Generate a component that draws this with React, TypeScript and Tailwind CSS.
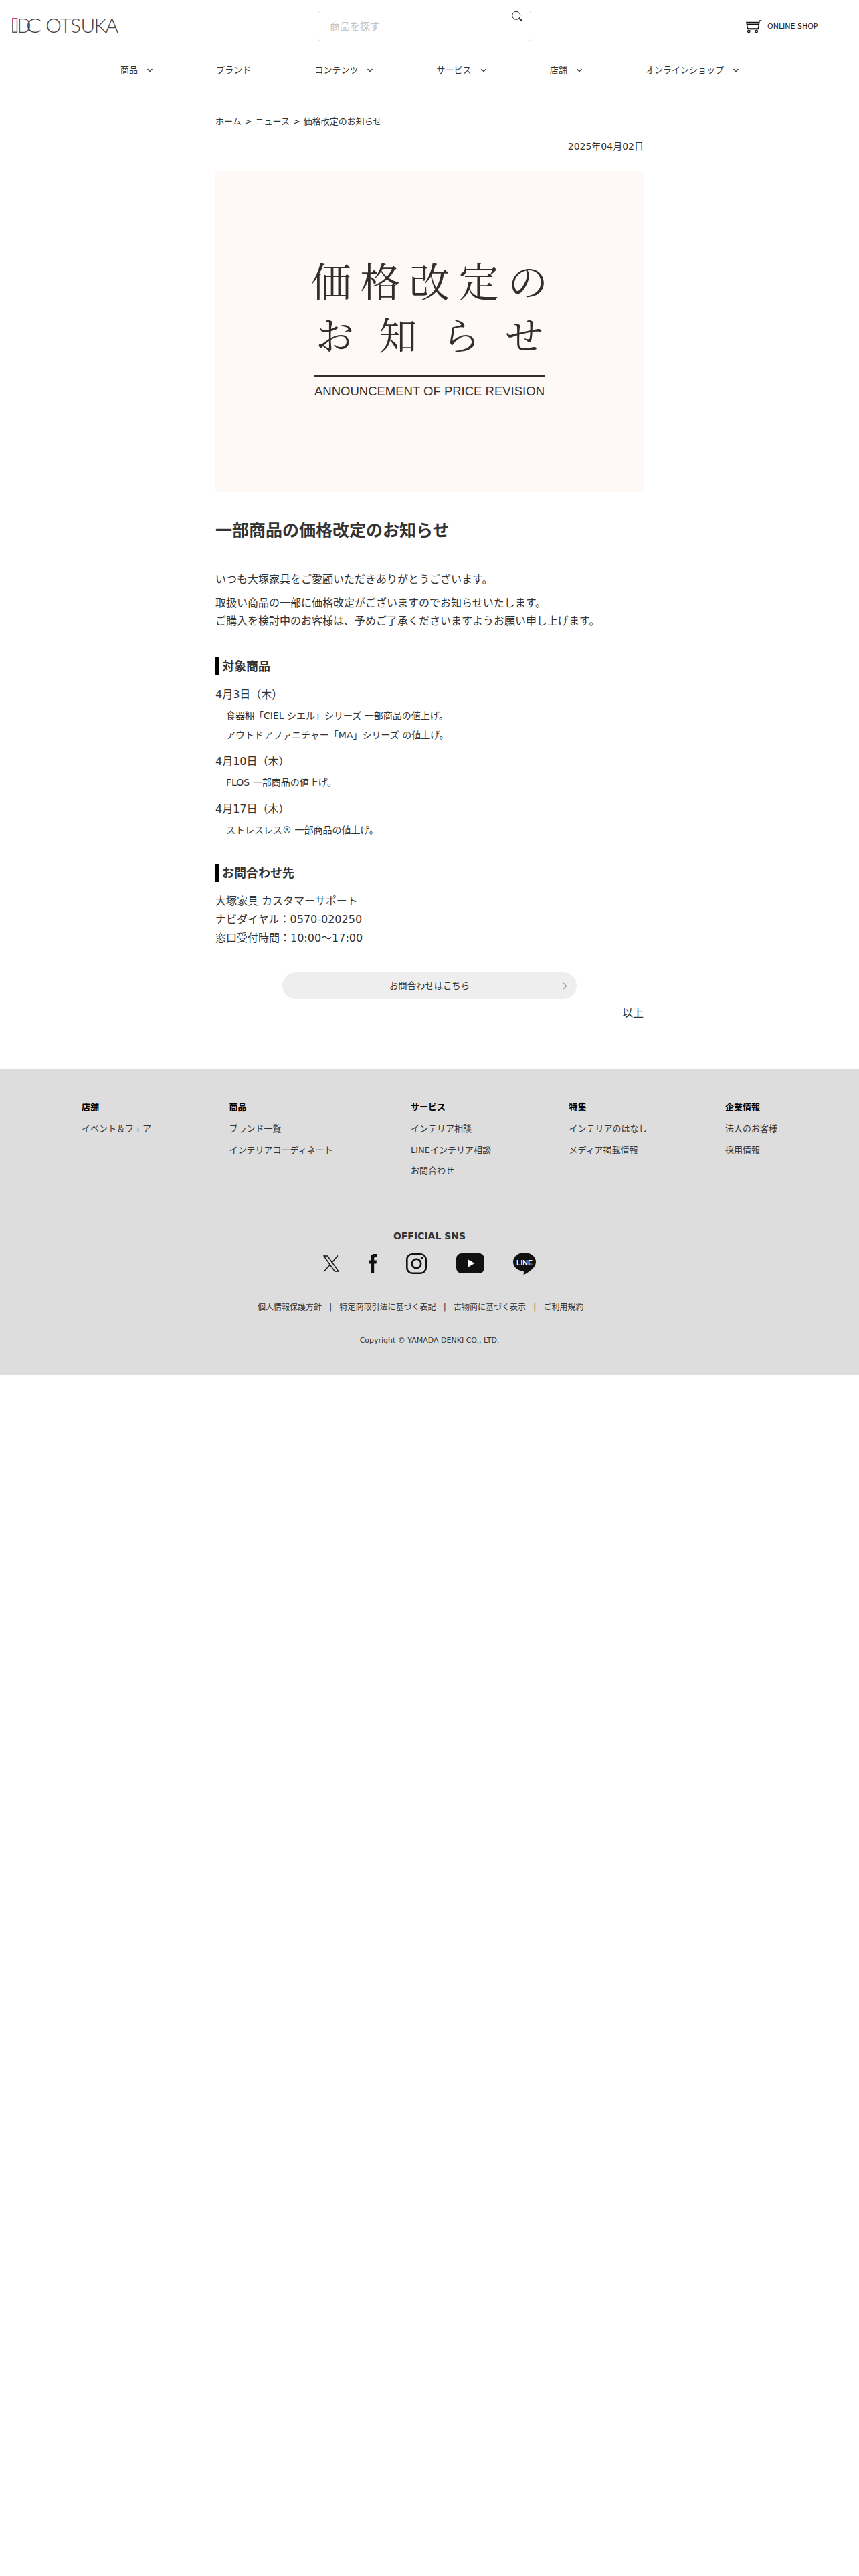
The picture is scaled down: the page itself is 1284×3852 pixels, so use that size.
import type { ReactNode } from 'react'

const navItems = [
  { label: '商品', menu: true },
  { label: 'ブランド', menu: false },
  { label: 'コンテンツ', menu: true },
  { label: 'サービス', menu: true },
  { label: '店舗', menu: true },
  { label: 'オンラインショップ', menu: true },
]

const footerColumns = [
  { title: '店舗', links: ['イベント＆フェア'] },
  { title: '商品', links: ['ブランド一覧', 'インテリアコーディネート'] },
  { title: 'サービス', links: ['インテリア相談', 'LINEインテリア相談', 'お問合わせ'] },
  { title: '特集', links: ['インテリアのはなし', 'メディア掲載情報'] },
  { title: '企業情報', links: ['法人のお客様', '採用情報'] },
]

const legalLinks = ['個人情報保護方針', '特定商取引法に基づく表記', '古物商に基づく表示', 'ご利用規約']

function Logo() {
  return (
    <svg width="164" height="26" viewBox="0 0 164 26" className="block" aria-label="IDC OTSUKA">
      <defs>
        <linearGradient id="mark" x1="0" y1="0" x2="0" y2="1">
          <stop offset="0" stopColor="#c8285f" />
          <stop offset="0.25" stopColor="#c8285f" />
          <stop offset="0.4" stopColor="#4a4a4a" />
        </linearGradient>
      </defs>
      <rect x="1.9" y="2.8" width="6.6" height="20.4" fill="none" stroke="url(#mark)" strokeWidth="1.4" />
      <g fill="#444" fontFamily="Lato" fontWeight="300" fontSize="30">
        <text x="8.5" y="24" textLength="21" lengthAdjust="spacingAndGlyphs">D</text>
        <text x="22" y="24" textLength="23" lengthAdjust="spacingAndGlyphs">C</text>
        <text x="51.3 72.3 88 103.5 123.5 140.500" y="24">OTSUKA</text>
      </g>
    </svg>
  )
}

function ChevronDown() {
  return (
    <svg width="8" height="6" viewBox="0 0 8 6" fill="none" stroke="#333" strokeWidth="1.3">
      <path d="M0.5 1 4 4.6 7.5 1" />
    </svg>
  )
}

function CartIcon() {
  return (
    <svg width="24" height="20" viewBox="0 0 24 20" fill="none" stroke="#111" strokeWidth="1.3">
      <path d="M1 3.5h18.5v3H1.5z" fill="#bbb" />
      <path d="M1 3.5 2.8 13.5h15.4L20.2 1h3.3" />
      <path d="M2.8 13.2h15.4" strokeWidth="1.8" />
      <circle cx="4.3" cy="17" r="1.7" />
      <circle cx="15.8" cy="17" r="1.7" />
    </svg>
  )
}

function Header() {
  return (
    <header className="h-[132px] border-b border-[#e5e5e5]">
      <div className="flex h-[77px] items-start">
        <div className="w-[475px] pl-[17px] pt-[25px]">
          <Logo />
        </div>
        <div className="mt-4 flex h-[46px] w-[319px] items-start rounded border border-[#ddd]">
          <span className="mt-[11px] w-[271px] pl-[17px] text-[15px] leading-6 text-[#c4c4c4]">商品を探す</span>
          <span className="mt-2 h-[30px] w-px bg-[#ddd]" />
          <svg className="ml-[17px]" width="17" height="16" viewBox="0 0 17 16" fill="none" stroke="#222">
            <circle cx="6.7" cy="6.3" r="6" />
            <path d="m11 10.5 4.7 4.3" strokeWidth="1.9" />
          </svg>
        </div>
        <div className="ml-[321px] mt-[30px] flex gap-[8px]">
          <CartIcon />
          <span className="text-[11px] leading-[20px] text-[#222]">ONLINE SHOP</span>
        </div>
      </div>
      <nav className="mx-[180px] flex h-[55px] justify-between">
        {navItems.map(item => (
          <div key={item.label} className="flex h-[55px] items-center gap-[14px] text-[13px]">
            <span>{item.label}</span>
            {item.menu && <ChevronDown />}
          </div>
        ))}
      </nav>
    </header>
  )
}

function Banner() {
  return (
    <div className="mt-[25px] flex h-[480px] flex-col items-center bg-[#fef9f7] pt-[129px] text-[#332d2c]">
      <div className="flex w-[354px] justify-between font-['Noto_Serif_CJK_JP','Noto_Sans_CJK_JP',serif] text-[60px] leading-[66px]">
        {['価', '格', '改', '定', 'の'].map(c => <span key={c}>{c}</span>)}
      </div>
      <div className="mt-[14px] flex w-[340px] justify-between font-['Noto_Serif_CJK_JP','Noto_Sans_CJK_JP',serif] text-[57px] leading-[66px]">
        {['お', '知', 'ら', 'せ'].map(c => <span key={c}>{c}</span>)}
      </div>
      <div className="mt-[30px] h-[2px] w-[346px] bg-[#332d2c]" />
      <p className="mt-[10px] whitespace-nowrap font-['Liberation_Sans',sans-serif] text-[18.5px] leading-[24px]">
        ANNOUNCEMENT OF PRICE REVISION
      </p>
    </div>
  )
}

function SectionTitle({ children }: { children: ReactNode }) {
  return (
    <h2 className="border-l-[5px] border-black pl-[5px] text-[18px] font-bold leading-[27px]">{children}</h2>
  )
}

function Article() {
  return (
    <main className="mx-auto h-[1467px] w-[640px] pt-[37px] text-[16px] leading-[27px]">
      <p className="flex gap-[5px] text-[13px] leading-[26px]">
        <span>ホーム</span>
        <span>&gt;</span>
        <span>ニュース</span>
        <span>&gt;</span>
        <span>価格改定のお知らせ</span>
      </p>
      <p className="mt-[12px] text-right text-[14px] leading-[24px]">2025年04月02日</p>
      <Banner />
      <h1 className="mt-[38px] text-[25px] font-bold leading-[40px]">一部商品の価格改定のお知らせ</h1>

      <p className="mt-[39px]">いつも大塚家具をご愛顧いただきありがとうございます。</p>
      <p className="mt-[8px]">
        取扱い商品の一部に価格改定がございますのでお知らせいたします。
        <br />
        ご購入を検討中のお客様は、予めご了承くださいますようお願い申し上げます。
      </p>

      <div className="mt-[41px]">
        <SectionTitle>対象商品</SectionTitle>
        <p className="mt-[15px]">4月3日（木）</p>
        <p className="mt-[5px] pl-4 text-[14px]">食器棚「CIEL シエル」シリーズ 一部商品の値上げ。</p>
        <p className="mt-[2px] pl-4 text-[14px]">アウトドアファニチャー「MA」シリーズ の値上げ。</p>
        <p className="mt-[12px]">4月10日（木）</p>
        <p className="mt-[5px] pl-4 text-[14px]">FLOS 一部商品の値上げ。</p>
        <p className="mt-[12px]">4月17日（木）</p>
        <p className="mt-[5px] pl-4 text-[14px]">ストレスレス® 一部商品の値上げ。</p>
      </div>

      <div className="mt-[37px]">
        <SectionTitle>お問合わせ先</SectionTitle>
        <p className="mt-[15px] leading-[27.4px]">
          大塚家具 カスタマーサポート
          <br />
          ナビダイヤル：0570-020250
          <br />
          窓口受付時間：10:00～17:00
        </p>
      </div>

      <a className="mx-auto mt-[38px] grid h-[40px] w-[440px] grid-cols-[1fr_auto_1fr] items-center rounded-[20px] bg-[#eee] text-[13.333px]">
        <span />
        <span>お問合わせはこちら</span>
        <svg className="mr-[14px] justify-self-end" width="7" height="11" viewBox="0 0 7 11" fill="none" stroke="#999" strokeWidth="1.2">
          <path d="m1 1 4.6 4.5L1 10" />
        </svg>
      </a>
      <p className="mt-[8px] text-right">以上</p>
    </main>
  )
}

function SocialIcons() {
  return (
    <div className="ml-[483px] mt-[12px] flex h-[34px] items-center">
      <svg width="24" height="25" viewBox="0 0 24 25" fill="none" stroke="#111" strokeWidth="1.3">
        <path d="M1 1h5.6L23 24h-5.6z" />
        <path d="M22 .5 13 11M10.5 14 1 24.5" />
      </svg>
      <svg className="ml-[44px]" width="12" height="28" viewBox="0 0 12 28" fill="#111">
        <path d="M3 28V14.5H0v-5h3V6.4C3 2.3 4.8 0 8.7 0H12v4.7h-2c-1.5 0-1.8.7-1.8 2v2.8H12l-.5 5H8.2V28z" />
      </svg>
      <svg className="ml-[44px]" width="31" height="31" viewBox="0 0 31 31" fill="none" stroke="#111" strokeWidth="2.6">
        <rect x="1.3" y="1.3" width="28.4" height="28.4" rx="8" />
        <circle cx="15.5" cy="15.5" r="6.7" />
        <circle cx="23.7" cy="7.3" r="1.8" fill="#111" stroke="none" />
      </svg>
      <svg className="ml-[44px]" width="42" height="30" viewBox="0 0 42 30">
        <rect width="42" height="30" rx="8" fill="#111" />
        <path d="M17 9v12l10.5-6z" fill="#fff" />
      </svg>
      <svg className="ml-[43px]" width="34" height="33" viewBox="0 0 34 33">
        <path
          d="M17 0C7.6 0 0 6.2 0 13.9c0 6.9 6.1 12.6 14.3 13.7 2 .4 1.8 1 1.3 4.6-.1.7.3.9 1 .5C22.5 29.6 34 22.500 34 13.9 34 6.2 26.4 0 17 0Z"
          fill="#111"
        />
        <text x="5" y="18.5" textLength="24" lengthAdjust="spacingAndGlyphs" fill="#fff" fontFamily="Liberation Sans" fontWeight="700" fontSize="11.5">
          LINE
        </text>
      </svg>
    </div>
  )
}

function Footer() {
  return (
    <footer className="h-[457px] bg-[#ddd] pt-[44px]">
      <div className="mx-[122px] flex h-[180px] justify-between text-[13px] leading-[26px]">
        {footerColumns.map(col => (
          <div key={col.title}>
            <p className="font-bold text-black">{col.title}</p>
            <ul className="mt-[6px] space-y-[5.5px]">
              {col.links.map(link => <li key={link}>{link}</li>)}
            </ul>
          </div>
        ))}
      </div>
      <p className="mt-[13px] text-center text-[14px] font-bold leading-[24px]">OFFICIAL SNS</p>
      <SocialIcons />
      <ul className="ml-[385px] mt-[39px] flex text-[12px] leading-[20px]">
        {legalLinks.map((link, i) => (
          <li key={link} className="flex">
            {i > 0 && <span className="w-[26.5px] text-center">|</span>}
            {link}
          </li>
        ))}
      </ul>
      <p className="mt-[30px] text-center text-[11px] leading-[20px]">Copyright © YAMADA DENKI CO., LTD.</p>
    </footer>
  )
}

export default function App() {
  return (
    <div lang="ja" className="min-h-[3852px] bg-white font-['DejaVu_Sans','Noto_Sans_CJK_JP',sans-serif] text-[#333]">
      <Header />
      <Article />
      <Footer />
    </div>
  )
}
